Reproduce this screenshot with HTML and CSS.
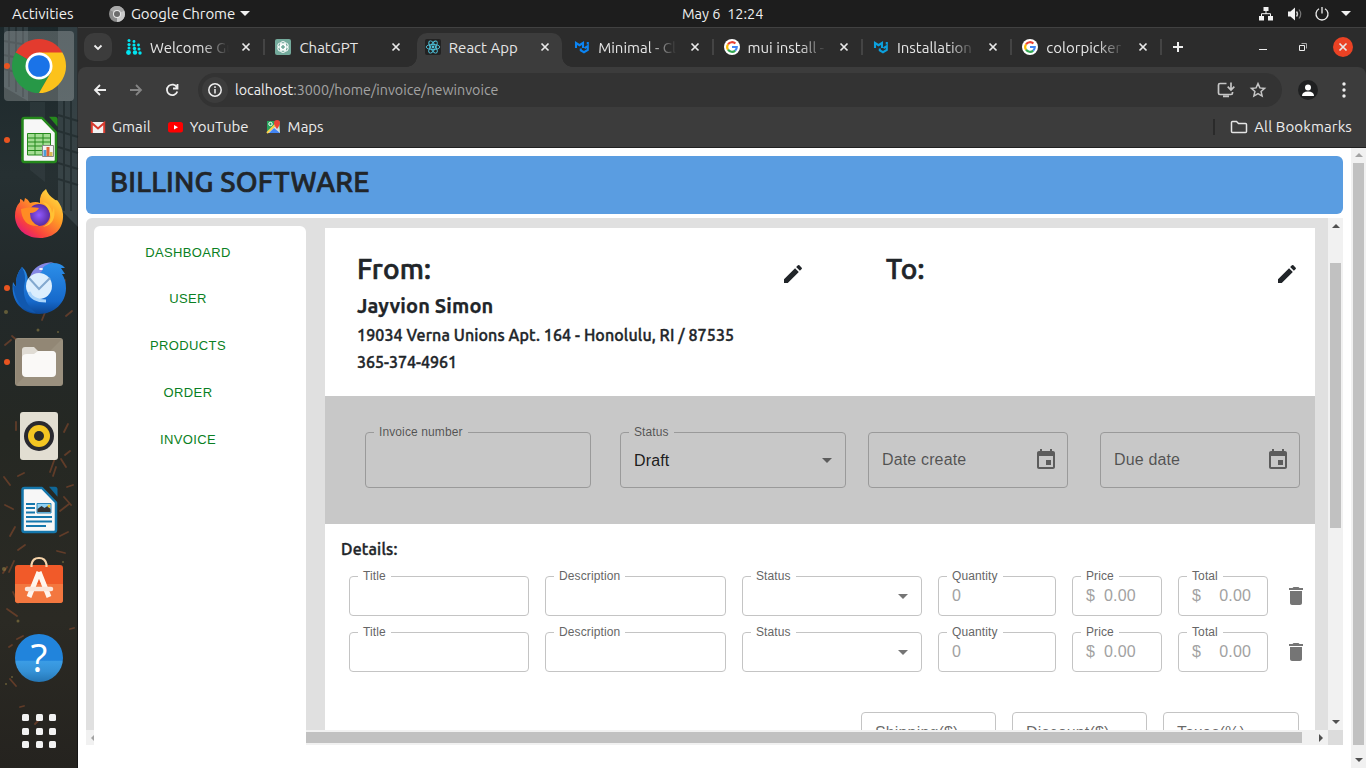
FILE: index.html
```html
<!DOCTYPE html>
<html lang="en">
<head>
<meta charset="utf-8">
<title>React App</title>
<link rel="stylesheet" href="styles.css">
</head>
<body>
<svg class="defs" width="0" height="0">
  <defs>
    <symbol id="close" viewBox="0 0 10 10"><path d="M1.500 1.500l7 7M8.500 1.500l-7 7" stroke="#e8e8e8" stroke-width="1.700" fill="none"/></symbol>
    <symbol id="google" viewBox="0 0 16 16"><circle cx="8" cy="8" r="8" fill="#fff"/><g fill="none" stroke-width="2.100"><path d="M4 5.300A4.800 4.800 0 0 1 11.400 4.600" stroke="#ea4335"/><path d="M4 5.300A4.800 4.800 0 0 0 4 10.700" stroke="#fbbc05"/><path d="M4 10.700A4.800 4.800 0 0 0 11.200 11.600" stroke="#34a853"/><path d="M8 8h4.800A4.800 4.800 0 0 1 11.200 11.600" stroke="#4285f4"/></g></symbol>
    <symbol id="mui" viewBox="0 0 16 16"><path d="M2 9V4L5.500 6.200 9 4v5M6.800 9.500v1.800L10 13.200l3.800-2.200V7.200L10.500 9.200M13.800 5.500V3" fill="none" stroke="currentColor" stroke-width="2.100"/></symbol>
    <symbol id="edit" viewBox="0 0 24 24"><path d="M3 17.250V21h3.750L17.810 9.940l-3.750-3.750L3 17.250zM20.710 7.040c.39-.39.39-1.020 0-1.410l-2.340-2.340a.9959.9959 0 0 0-1.410 0l-1.830 1.830 3.750 3.750 1.830-1.830z"/></symbol>
    <symbol id="event" viewBox="0 0 24 24"><path d="M17 12h-5v5h5v-5zM16 1v2H8V1H6v2H5c-1.110 0-1.990.9-1.990 2L3 19c0 1.100.89 2 2 2h14c1.100 0 2-.9 2-2V5c0-1.100-.9-2-2-2h-1V1h-2zm3 18H5V8h14v11z"/></symbol>
    <symbol id="drop" viewBox="0 0 24 24"><path d="M7 10l5 5 5-5z"/></symbol>
    <symbol id="trash" viewBox="0 0 24 24"><path d="M6 19c0 1.100.9 2 2 2h8c1.100 0 2-.9 2-2V7H6v12zM19 4h-3.500l-1-1h-5l-1 1H5v2h14V4z"/></symbol>
  </defs>
</svg>

<header class="topbar">
  <span class="activities">Activities</span>
  <svg class="app-icon" width="16" height="16" viewBox="0 0 16 16"><circle cx="8" cy="8" r="8" fill="#8b8b8b"/><path d="M8 8L1 4A8 8 0 0 1 15.200 4.500z" fill="#a9a9a9"/><path d="M8 8L15.200 4.500A8 8 0 0 1 8 16z" fill="#c9c9c9"/><circle cx="8" cy="8" r="4" fill="#e8e8e8"/><circle cx="8" cy="8" r="3" fill="#6b6b6b"/></svg>
  <span class="app-name">Google Chrome</span>
  <i class="caret"></i>
  <time class="clock">May 6&nbsp; 12:24</time>
  <div class="tray">
    <svg width="16" height="14" viewBox="0 0 16 14" fill="#f2f2f2"><path d="M5.500 0h5v4h-5zM1 9h5v4.500H1zM10 9h5v4.500h-5z"/><path d="M8 4v3M3.500 9V6.700h9V9" stroke="#f2f2f2" fill="none"/></svg>
    <svg width="16" height="14" viewBox="0 0 16 14"><path d="M1 4.500h2.500L8 .5v13l-4.500-4H1z" fill="#f2f2f2"/><path d="M9.500 4.500q2 2.500 0 5" stroke="#ccc" fill="none" stroke-width="1.400"/><path d="M12 2.500q3.500 4.500 0 9" stroke="#777" fill="none" stroke-width="1.200"/></svg>
    <svg width="16" height="14" viewBox="0 0 16 14" fill="none" stroke="#eee" stroke-width="1.300"><path d="M5 1.800a6 6 0 1 0 6 0M8 0v6.500"/></svg>
    <i class="caret"></i>
  </div>
</header>

<div class="desktop">
  <nav class="dock">
    <svg class="wallpaper" width="78" height="741" viewBox="0 0 78 741">
      <g fill="#5d6b70" opacity=".32"><path d="M4 0h24v74L4 60z"/><path d="M58 0h20v200l-20-20z"/><path d="M30 75h15v80l-15-12z" opacity=".5"/></g>
      <g stroke="#1b2527" stroke-width="2" opacity=".6"><path d="M4 14l24 4M4 28l24 5M4 42l24 6M58 88l20 6M58 104l20 6M58 120l20 6M58 136l20 6M58 152l20 6M9 0v60M16 0v65M23 0v70M64 74v110M71 74v110"/></g>
      <g fill="none" stroke="#8f4c2d" stroke-width="1.800" stroke-linecap="round" opacity=".55"><path d="M22 131l3-3M60 265l5-12M12 309l7 6M46 283l-4 10M72 284l-6 5M5 318l6-5M68 397l-4 8M16 395v8M18 449l6-3M50 445l5-14M56 440l-3 9M67 460l6-2M4 450l6 8M61 432l5 8M50 418l4-4M64 470l7 8M5 478l8 4M15 500l-5 9M9 545l5-11M57 524l8 2M13 565l5 11M7 582l10 7M17 612l6-3M70 602l4-1M60 484l9-7M7 540l-4 6M10 652l6 7M20 680l4-1M35 697l5-5M68 505l-8 4M9 620l3-2M25 518l-7 5M70 424l-5 4"/></g>
      <g fill="#b19a4d" opacity=".45"><circle cx="6" cy="285" r="2"/><circle cx="38" cy="303" r="1.500"/><circle cx="17" cy="317" r="2"/><circle cx="58" cy="305" r="1"/><circle cx="4" cy="542" r="2"/><circle cx="18" cy="594" r="1.500"/><circle cx="63" cy="535" r="1"/><circle cx="6" cy="657" r="1"/><circle cx="12" cy="650" r="1"/></g>
    </svg>
    <div class="launcher active running"><svg width="54" height="54" viewBox="0 0 54 54"><path d="M27 27L3.600 13.500A27 27 0 0 1 50.400 13.500z" fill="#e33b2e"/><path d="M27 27L3.600 13.500A27 27 0 0 0 27 54L38.700 33.700z" fill="#279847"/><path d="M27 54A27 27 0 0 0 50.400 13.500H27L38.700 33.700z" fill="#fcc21b"/><circle cx="27" cy="27" r="13.500" fill="#fff"/><circle cx="27" cy="27" r="10.800" fill="#1a73e8"/></svg></div>
    <div class="launcher running"><svg width="48" height="48" viewBox="0 0 48 48"><path d="M9.500 2H27L41 16.500V44q0 2-2 2H9.500q-2 0-2-2V4q0-2 2-2z" fill="#f7f7f7" stroke="#25891c" stroke-width="2.500" stroke-linejoin="round"/><path d="M34 .8h6q2.500 0 2.500 2.500v7.500z" fill="#25891c"/><path d="M12.500 17.500h23V39h-23z" fill="#a3dd93"/><path d="M12.500 17.500h23V39h-23zM20 17v22M28 17v22M12 22h24M12 26h24M12 30h24M12 34.500h24" stroke="#25891c" fill="none"/><path d="M27.500 29.500h11v11h-11z" fill="#f3f3f3" stroke="#888"/><path d="M28.500 34h3v6h-3z" fill="#4c9ed9"/><path d="M31.500 31h3v9h-3z" fill="#dd653a"/><path d="M34.500 36h3v4h-3z" fill="#d5bd55"/></svg></div>
    <div class="launcher"><svg width="48" height="50" viewBox="0 0 48 50"><defs><linearGradient id="fox" x1="1" y1="0" x2=".2" y2="1"><stop offset="0" stop-color="#fff24c"/><stop offset=".45" stop-color="#ff9a25"/><stop offset=".8" stop-color="#f8413e"/><stop offset="1" stop-color="#df1680"/></linearGradient><radialGradient id="orb"><stop offset="0" stop-color="#9059ff"/><stop offset="1" stop-color="#5a2ca0"/></radialGradient></defs><path d="M31 0q2 6 8 10 2 2 3 1 5 6 6 14C49 40 39 49 25 49 9 49 0 38 0 27q0-9 5-14v-3q2 0 4 3l1-4q3 1 5 5 6-2 10 0Q24 5 31 0z" fill="url(#fox)"/><circle cx="24" cy="26" r="11" fill="url(#orb)"/><path d="M6 20q9-3 18-1-3 5-9 5 0 10 9 13-17 1-18-17z" fill="#ff8c24"/><path d="M27 13q9 1 10 11l2-6q3 17-11 20 10-5 7-14-3-8-8-11z" fill="#ffc133"/></svg></div>
    <div class="launcher running"><svg width="54" height="54" viewBox="0 0 54 54"><defs><linearGradient id="bird" x1="0" y1="0" x2="0" y2="1"><stop offset="0" stop-color="#2c8fe9"/><stop offset=".75" stop-color="#1669cb"/><stop offset="1" stop-color="#0c4694"/></linearGradient></defs><path d="M10 6q6 5 6 15l6-5Q25 2 41 2q8 0 12 5h-4l4 6h-3q4 6 4 14c0 15-12 26-27 26C10 53-2 40 1 21l3 5Q3 14 10 6z" fill="url(#bird)"/><path d="M10 6q5 9 2 19-2 16 12 27Q4 49 1 24l3 2Q3 14 10 6z" fill="#1158ae"/><path d="M18 16Q22 2 42 1 30 4 30 10q-4 5-12 6z" fill="#8588e4"/><circle cx="27" cy="25" r="13" fill="#dceefd"/><path d="M17 17l10 11 11-11" fill="none" stroke="#83a9cf" stroke-width="2"/><path d="M17 31q3 9 17 9" fill="none" stroke="#a9d4fb" stroke-width="3"/><ellipse cx="29" cy="8" rx="2" ry="1" fill="#fff"/></svg></div>
    <div class="launcher running"><svg width="48" height="48" viewBox="0 0 48 48"><rect width="48" height="48" rx="3" fill="#9a907e"/><path d="M1 1h46L1 47z" fill="#8d8270" opacity=".6"/><path d="M7 19v-7q0-3 3-3h9l4 4h14q4 0 4 4v16H7z" fill="#e0dcd4"/><path d="M7 20q0-4 5-4h7l4-3h14q4 0 4 4v18q0 4-4 4H11q-4 0-4-4z" fill="#faf9f7"/></svg></div>
    <div class="launcher"><svg width="48" height="48" viewBox="0 0 48 48"><rect x="5" width="38" height="48" rx="3" fill="#e2ded2"/><circle cx="24" cy="24" r="15" fill="#29292f"/><circle cx="24" cy="24" r="11" fill="#f4c522"/><circle cx="24" cy="24" r="5" fill="#2a2a2a"/></svg></div>
    <div class="launcher"><svg width="48" height="48" viewBox="0 0 48 48"><path d="M9.500 2H27L41 16.500V44q0 2-2 2H9.500q-2 0-2-2V4q0-2 2-2z" fill="#f7f7f7" stroke="#1577ac" stroke-width="2.500" stroke-linejoin="round"/><path d="M34 .8h6q2.500 0 2.500 2.500v7.500z" fill="#0f6798"/><path d="M11 18h9M11 22h9M11 26.500h9M11 31h26M11 35.500h26M11 40h20" stroke="#1577ac" stroke-width="2"/><path d="M22 17.500h14V27H22z" fill="#8fd0f2" stroke="#2b86b8"/><path d="M22.500 26v-3l4-3 3 2 3-2 3 3v3z" fill="#333"/><circle cx="34" cy="20" r="1.500" fill="#edc12f"/></svg></div>
    <div class="launcher"><svg width="48" height="48" viewBox="0 0 48 48"><rect y="5" width="48" height="38" rx="3" fill="#f15a29"/><path d="M0 24h48v16q0 3-3 3H3q-3 0-3-3z" fill="#f3773f"/><path d="M16.500 7V4.500q1-6.500 7.500-6.500t7.500 6.500V7" fill="none" stroke="#f7d4aa" stroke-width="2.200"/><path d="M24 12L14 37M24 12l10 25" stroke="#fff5ed" stroke-width="5" fill="none"/><path d="M12 29h24" stroke="#fbe6da" stroke-width="4.500" stroke-linecap="round"/></svg></div>
    <div class="launcher"><div class="help">?</div></div>
    <div class="launcher"><div class="apps-grid"><i></i><i></i><i></i><i></i><i></i><i></i><i></i><i></i><i></i></div></div>
  </nav>

  <main class="browser">
    <div class="tabstrip">
      <button class="tab-search"><svg width="12" height="12" viewBox="0 0 12 12"><path d="M2.500 4.500L6 8l3.500-3.500" stroke="#eee" stroke-width="1.800" fill="none"/></svg></button>
      <div class="tab">
        <svg width="16" height="16" viewBox="0 0 16 16" fill="#00e5f2"><circle cx="3" cy="1.500" r="1.500"/><circle cx="8" cy="2.500" r="1.400"/><circle cx="3" cy="5.500" r="1.600"/><circle cx="8" cy="6" r="1.600"/><circle cx="12.500" cy="6" r="1.400"/><circle cx="3" cy="9" r="1.500"/><circle cx="8.500" cy="9.500" r="1.700"/><circle cx="13" cy="10" r="1.500"/><circle cx="2.500" cy="13.500" r="2.400"/><circle cx="9" cy="13.500" r="2.200"/><circle cx="14" cy="14" r="1.700"/></svg>
        <span class="tab-title fade">Welcome Gu</span><svg class="x" width="10" height="10"><use href="#close"/></svg>
      </div>
      <div class="tab sep">
        <svg width="16" height="16" viewBox="0 0 16 16"><rect width="16" height="16" rx="2" fill="#74aa9c"/><g fill="none" stroke="#fff" stroke-width=".9"><rect x="5.500" y="2.500" width="5" height="8" rx="2.500"/><rect x="5.500" y="2.500" width="5" height="8" rx="2.500" transform="rotate(60 8 8)"/><rect x="5.500" y="2.500" width="5" height="8" rx="2.500" transform="rotate(120 8 8)"/><rect x="5.500" y="2.500" width="5" height="8" rx="2.500" transform="rotate(180 8 8)"/><rect x="5.500" y="2.500" width="5" height="8" rx="2.500" transform="rotate(240 8 8)"/><rect x="5.500" y="2.500" width="5" height="8" rx="2.500" transform="rotate(300 8 8)"/></g></svg>
        <span class="tab-title">ChatGPT</span><svg class="x" width="10" height="10"><use href="#close"/></svg>
      </div>
      <div class="tab current">
        <svg width="16" height="16" viewBox="0 0 16 16"><rect width="16" height="16" rx="2" fill="#222"/><g fill="none" stroke="#4fc3dc" stroke-width=".9"><ellipse cx="8" cy="8" rx="6.800" ry="2.600"/><ellipse cx="8" cy="8" rx="6.800" ry="2.600" transform="rotate(60 8 8)"/><ellipse cx="8" cy="8" rx="6.800" ry="2.600" transform="rotate(120 8 8)"/></g><circle cx="8" cy="8" r="1.400" fill="#4fc3dc"/></svg>
        <span class="tab-title">React App</span><svg class="x" width="10" height="10"><use href="#close"/></svg>
      </div>
      <div class="tab">
        <svg class="mui-blue" width="16" height="16"><use href="#mui"/></svg>
        <span class="tab-title fade">Minimal - Cli</span><svg class="x" width="10" height="10"><use href="#close"/></svg>
      </div>
      <div class="tab sep">
        <svg width="16" height="16"><use href="#google"/></svg>
        <span class="tab-title fade">mui install -</span><svg class="x" width="10" height="10"><use href="#close"/></svg>
      </div>
      <div class="tab sep">
        <svg class="mui-cyan" width="16" height="16"><use href="#mui"/></svg>
        <span class="tab-title fade">Installation</span><svg class="x" width="10" height="10"><use href="#close"/></svg>
      </div>
      <div class="tab sep">
        <svg width="16" height="16"><use href="#google"/></svg>
        <span class="tab-title fade">colorpicker</span><svg class="x" width="10" height="10"><use href="#close"/></svg>
      </div>
      <div class="new-tab sep"><svg width="10" height="10" viewBox="0 0 10 10"><path d="M5 0v10M0 5h10" stroke="#eee" stroke-width="2"/></svg></div>
      <div class="window-controls">
        <svg width="8" height="8" viewBox="0 0 8 8"><path d="M0 6.500h8" stroke="#eee"/></svg>
        <svg width="8" height="8" viewBox="0 0 8 8"><path d="M.5 2.500h5v5h-5z" stroke="#eee" fill="none"/><path d="M2.500.5h5v5" stroke="#aaa" fill="none"/></svg>
        <span class="window-close"><svg width="10" height="10"><use href="#close"/></svg></span>
      </div>
    </div>

    <div class="chrome-bars">
      <div class="toolbar">
        <svg width="14" height="14" viewBox="0 0 14 14"><path d="M13 7H2M7 2L2 7l5 5" stroke="#eee" stroke-width="1.800" fill="none"/></svg>
        <svg width="14" height="14" viewBox="0 0 14 14"><path d="M1 7h11M7 2l5 5-5 5" stroke="#858585" stroke-width="1.800" fill="none"/></svg>
        <svg width="14" height="14" viewBox="0 0 14 14"><path d="M12 4.500A5.300 5.300 0 1 0 12.300 8.500M12.500 1v4.500H8" stroke="#eee" stroke-width="1.800" fill="none"/></svg>
        <div class="omnibox">
          <span class="site-info"><svg width="16" height="16" viewBox="0 0 16 16"><circle cx="8" cy="8" r="6.200" stroke="#eee" stroke-width="1.500" fill="none"/><path d="M8 7v4.500M8 4.300v1.600" stroke="#eee" stroke-width="1.500"/></svg></span>
          <span class="url"><b>localhost</b>:3000/home/invoice/newinvoice</span>
          <svg class="install" width="18" height="16" viewBox="0 0 18 16"><path d="M9.500 1.500H3q-1.500 0-1.500 1.500v8q0 1.500 1.500 1.500h11q1.500 0 1.500-1.500v-1M14 .5v7M10.700 4.700L14 8l3.300-3.300M6 14.300h6" stroke="#c6c6c6" stroke-width="1.700" fill="none"/></svg>
          <svg width="16" height="16" viewBox="0 0 16 16"><path d="M8 1.600l1.900 4.300 4.700.5-3.500 3.100 1 4.600L8 11.700l-4.100 2.400 1-4.600L1.400 6.400l4.700-.5z" stroke="#c6c6c6" stroke-width="1.500" fill="none"/></svg>
        </div>
        <svg class="avatar" width="20" height="20" viewBox="0 0 20 20"><circle cx="10" cy="10" r="10" fill="#1f2021"/><circle cx="10" cy="7.500" r="3" fill="#fff"/><path d="M4 16q0-4.500 6-4.500t6 4.500z" fill="#fff"/></svg>
        <svg class="kebab" width="4" height="16" viewBox="0 0 4 16" fill="#eee"><circle cx="2" cy="2" r="1.700"/><circle cx="2" cy="8" r="1.700"/><circle cx="2" cy="14" r="1.700"/></svg>
      </div>
      <div class="bookmarks">
        <svg width="16" height="16" viewBox="0 0 16 16"><path d="M1 3h14v11H1z" fill="#f2f2f2"/><path d="M1.800 14V4L8 9.500 14.200 4v10" fill="none" stroke="#d93a2e" stroke-width="2"/></svg>
        <span class="bm gmail">Gmail</span>
        <svg width="16" height="16" viewBox="0 0 16 16"><rect y="3" width="15" height="10.500" rx="2.500" fill="#f00"/><path d="M6 6v4.600l4-2.300z" fill="#fff"/></svg>
        <span class="bm youtube">YouTube</span>
        <svg width="16" height="16" viewBox="0 0 16 16"><path d="M1 2h13v12H1z" fill="#28a35d"/><path d="M1 14L13 4l1 10z" fill="#d9dddf"/><path d="M3 14l5-5 6 5z" fill="#4285f4"/><path d="M1 14L12 3" stroke="#fdd34c" stroke-width="2"/><path d="M11 1a3 3 0 0 1 3 3q0 2-3 6-3-4-3-6a3 3 0 0 1 3-3z" fill="#ea4335"/><circle cx="4.500" cy="5" r="1.700" fill="none" stroke="#fff"/></svg>
        <span class="bm">Maps</span>
        <i class="bm-rule"></i>
        <svg class="folder" width="18" height="14" viewBox="0 0 18 14"><path d="M1.500 11.500v-9q0-1 1-1h4L8.500 3.500h7q1 0 1 1v7q0 1-1 1h-13q-1 0-1-1z" stroke="#e4e4e4" stroke-width="1.500" fill="none"/></svg>
        <span class="bm all">All Bookmarks</span>
      </div>
    </div>

    <div class="viewport">
      <div class="page">
        <div class="brand"><h1>BILLING SOFTWARE</h1></div>
        <div class="shell">
          <aside class="sidebar">
            <a>DASHBOARD</a><a>USER</a><a>PRODUCTS</a><a>ORDER</a><a>INVOICE</a>
          </aside>
          <div class="content">
            <section class="paper">
              <div class="parties">
                <div class="party from">
                  <div class="party-head"><h2>From:</h2><svg class="edit" width="24" height="24"><use href="#edit"/></svg></div>
                  <h3>Jayvion Simon</h3>
                  <p class="address">19034 Verna Unions Apt. 164 - Honolulu, RI / 87535</p>
                  <p>365-374-4961</p>
                </div>
                <div class="party to">
                  <div class="party-head"><h2>To:</h2><svg class="edit" width="24" height="24"><use href="#edit"/></svg></div>
                </div>
              </div>
              <div class="meta">
                <div class="field"><label>Invoice number</label></div>
                <div class="field"><label>Status</label><span class="value">Draft</span><svg class="arrow" width="24" height="24"><use href="#drop"/></svg></div>
                <div class="field date"><span class="placeholder">Date create</span><svg width="24" height="24"><use href="#event"/></svg></div>
                <div class="field date"><span class="placeholder">Due date</span><svg width="24" height="24"><use href="#event"/></svg></div>
              </div>
              <div class="details">
                <h4>Details:</h4>
                <div class="item">
                  <div class="field"><label>Title</label></div>
                  <div class="field"><label>Description</label></div>
                  <div class="field"><label>Status</label><svg class="arrow" width="24" height="24"><use href="#drop"/></svg></div>
                  <div class="field"><label>Quantity</label><span class="hint">0</span></div>
                  <div class="field"><label>Price</label><span class="hint">$</span><span class="hint amount">0.00</span></div>
                  <div class="field"><label>Total</label><span class="hint">$</span><span class="hint amount end">0.00</span></div>
                  <svg class="trash" width="24" height="24"><use href="#trash"/></svg>
                </div>
                <div class="item">
                  <div class="field"><label>Title</label></div>
                  <div class="field"><label>Description</label></div>
                  <div class="field"><label>Status</label><svg class="arrow" width="24" height="24"><use href="#drop"/></svg></div>
                  <div class="field"><label>Quantity</label><span class="hint">0</span></div>
                  <div class="field"><label>Price</label><span class="hint">$</span><span class="hint amount">0.00</span></div>
                  <div class="field"><label>Total</label><span class="hint">$</span><span class="hint amount end">0.00</span></div>
                  <svg class="trash" width="24" height="24"><use href="#trash"/></svg>
                </div>
                <div class="extras">
                  <div class="field"><span class="placeholder">Shipping($)</span></div>
                  <div class="field"><span class="placeholder">Discount($)</span></div>
                  <div class="field"><span class="placeholder">Taxes(%)</span></div>
                </div>
              </div>
            </section>
          </div>
          <div class="vbar inner"><i class="up dark"></i><b></b><i class="down"></i></div>
          <div class="hbar"><i class="left"></i><b></b><i class="right"></i></div>
        </div>
      </div>
      <div class="vbar outer"><i class="up"></i><b></b><i class="down"></i></div>
    </div>
  </main>
</div>
</body>
</html>
```
FILE: styles.css
```css
* { box-sizing: border-box; }
body { margin: 0; width: 1366px; height: 768px; overflow: hidden; display: flex; flex-direction: column; font-family: Ubuntu, "Noto Sans", sans-serif; background: #fff; }
svg { display: block; flex: none; overflow: visible; }
.defs { position: absolute; }
h1, h2, h3, h4, p { margin: 0; white-space: nowrap; }
h1, h2, h3, h4, .party p { color: #212529; }

.topbar { height: 27px; flex: none; background: #1d1d1d; color: #f0f0f0; font-size: 15px; display: grid; grid-template-columns: 97px 16px 6px 121px 1fr auto; align-items: center; padding: 0 15px 0 12px; white-space: nowrap; position: relative; }
.topbar .app-name { grid-column: 4; letter-spacing: -.08px; }
.topbar .app-name + .caret { position: absolute; left: 240px; top: 11px; }
.caret { width: 0; height: 0; border: 5px solid transparent; border-top-color: #f0f0f0; border-bottom: 0; }
.clock { position: absolute; left: 682px; font-size: 14.500px; }
.tray { grid-column: 6; display: flex; align-items: center; gap: 11px; }
.tray svg:first-child { margin-right: 2px; }

.desktop { flex: 1; display: flex; min-height: 0; }
.dock { width: 78px; position: relative; background: linear-gradient(#1c282b, #263032 20%, #22292a 35%, #252823 55%, #2b2a24 80%, #25231f); border-right: 1px solid #151515; padding: 4px 4px 0; display: flex; flex-direction: column; gap: 4px; }
.wallpaper { position: absolute; left: 0; top: 0; }
.launcher { width: 70px; height: 70px; flex: none; border-radius: 4px; display: flex; align-items: center; justify-content: center; position: relative; }
.launcher.active { background: rgba(255,255,255,.22); }
.running::before { content: ""; position: absolute; left: 0; top: 32px; width: 6px; height: 6px; border-radius: 50%; background: #e95420; }
.help { width: 48px; height: 48px; border-radius: 50%; background: linear-gradient(#2184dc 55%, #3b9de6 56%, #3591d6 78%, #2576b5); color: #fff; font: 39px/46px "Open Sans", sans-serif; text-align: center; }
.apps-grid { display: grid; grid-template-columns: repeat(3, 7px); gap: 6.500px; margin-top: -2px; }
.apps-grid i { height: 7px; border-radius: 1.500px; background: #f2f2f2; }

.browser { flex: 1; min-width: 0; display: flex; flex-direction: column; background: #2c2c2c; }
.tabstrip { height: 40px; flex: none; border-top: 1px solid #414141; display: flex; align-items: center; padding: 0 0 1px 6px; color: #e6e6e6; font-size: 15px; }
.tab-search { width: 28px; height: 28px; padding: 0; border: 0; border-radius: 10px; background: #3c3c3c; display: flex; align-items: center; justify-content: center; margin-right: 6px; }
.tab { width: 149.400px; height: 38px; flex: none; display: flex; align-items: center; padding: 0 13px 0 8px; position: relative; }
.tab-title { margin-left: 8px; width: 79px; overflow: hidden; white-space: pre; }
.fade { mask-image: linear-gradient(90deg, #000 65%, transparent); }
.tab .x { margin-left: auto; margin-right: 3px; }
.tab.current::before { content: ""; position: absolute; z-index: 0; left: 0; right: 4px; top: 5px; bottom: -1px; border-radius: 10px 10px 0 0; background: #3c3c3c; }
.tab.current::after { content: ""; position: absolute; left: -10px; right: -6px; bottom: -1px; height: 10px; background: radial-gradient(circle at 0 0, transparent 9.500px, #3c3c3c 10px) left / 10px 10px no-repeat, radial-gradient(circle at 100% 0, transparent 9.500px, #3c3c3c 10px) right / 10px 10px no-repeat; }
.tab.current > * { position: relative; z-index: 1; }
.sep { position: relative; }
.sep::before { content: ""; position: absolute; left: -4px; top: 50%; margin-top: -8px; width: 2px; height: 16px; background: #444; }
.mui-blue { color: #0b84f3; }
.mui-cyan { color: #0ca0dd; }
.new-tab { padding-left: 9px; }
.window-controls { margin-left: auto; display: flex; align-items: center; gap: 32px; padding-right: 13px; }
.window-close { width: 20px; height: 20px; margin-left: -6px; border-radius: 50%; background: #eb4224; display: flex; align-items: center; justify-content: center; }

.chrome-bars { height: 81px; flex: none; background: #3c3c3c; border-radius: 8px 8px 0 0; border-bottom: 1px solid #202020; }
.toolbar { height: 46px; display: flex; align-items: center; gap: 22px; padding: 0 20px 0 15px; }
.omnibox { flex: none; width: 1084px; height: 34px; margin-left: -3px; padding: 0 16px 0 4px; border-radius: 17px; background: #333; display: flex; align-items: center; color: #a3a3a3; font-size: 14.300px; }
.site-info { width: 26px; height: 26px; border-radius: 50%; background: #3c3c3c; display: flex; align-items: center; justify-content: center; margin-right: 7px; }
.url b { color: #eee; font-weight: 400; }
.install { margin-left: auto; margin-right: 15px; }
.avatar { margin-left: -6px; }
.kebab { margin-left: 2px; }
.bookmarks { height: 27px; display: flex; align-items: center; padding: 0 14px 0 12px; color: #ececec; font-size: 15px; line-height: 17px; white-space: nowrap; }
.bm { margin-left: 6px; }
.bm.gmail { margin-right: 17px; letter-spacing: .1px; }
.bm.youtube { margin-right: 17px; }
.bm.all { letter-spacing: .13px; }
.bm-rule { width: 2px; height: 16px; background: #2a2a2a; margin-left: auto; margin-right: 15px; }

.viewport { flex: 1; min-height: 0; display: flex; background: #fff; }
.page { flex: 1; min-width: 0; padding: 8px 8px 0; }
.brand { height: 58px; border-radius: 6px; background: #5a9de1; padding: 9px 24px; }
h1, h2 { font-size: 28px; line-height: 34px; font-weight: 500; letter-spacing: .18px; -webkit-text-stroke: .7px #212529; }
.shell { position: relative; margin-top: 4px; height: 550px; display: grid; grid-template-columns: 1242px 15px; grid-template-rows: 512px 15px; }
.content { grid-area: 1 / 1; background: #e0e0e0; border-radius: 6px 0 0 0; padding: 10px 13px 0 239px; overflow: hidden; }
.sidebar { position: absolute; z-index: 2; left: 8px; top: 8px; width: 212px; height: 542px; background: #fff; border-radius: 6px 6px 0 0; padding: 3.500px 24px 0 0; display: flex; flex-direction: column; }
.sidebar a { font: 13px/46.750px "Liberation Sans", Arial, sans-serif; letter-spacing: .37px; text-align: center; color: #0a7f23; }
.paper { height: 502px; overflow: hidden; background: #fff; }
.parties { height: 168px; display: flex; padding: 24px 0 0 32px; }
.party.from { width: 529px; }
.party.to { width: 413px; }
.party-head { display: flex; justify-content: space-between; height: 34px; margin-bottom: 8px; }
.from .party-head { padding-right: 81px; }
.edit { margin-top: 10px; fill: #212529; }
h3 { font-size: 20px; line-height: 24px; font-weight: 700; letter-spacing: .13px; -webkit-text-stroke: .25px #212529; }
.party p { font-size: 16px; line-height: 19px; font-weight: 500; margin-top: 8px; -webkit-text-stroke: .4px #212529; }
.party .address { letter-spacing: .11px; }
.meta { height: 128px; background: #c8c8c8; padding: 36px 15px 0 40px; display: grid; grid-template-columns: 226px 226px 200px 200px; column-gap: 29px; }
.field { --line: #c4c4c4; --back: #fff; position: relative; height: 40px; border: 1px solid var(--line); border-radius: 4px; padding-left: 13px; display: flex; align-items: center; font: 16px/20px "Liberation Sans", Arial, sans-serif; letter-spacing: .15px; color: rgba(0,0,0,.87); white-space: nowrap; }
.field label { position: absolute; left: 8px; top: -8px; padding: 0 5px; font-size: 12px; line-height: 15px; letter-spacing: .11px; color: #666; background: var(--back); }
.meta .field { --line: #9a9a9a; --back: #c8c8c8; height: 56px; }
.meta .field label, .placeholder { color: rgba(0,0,0,.6); }
.meta .value { padding-top: 1px; }
.meta .field:nth-child(3) { margin-left: -7px; margin-right: 7px; }
.meta .field:nth-child(4) { margin-left: -4px; margin-right: 4px; }
.field svg { margin-left: auto; fill: rgba(0,0,0,.54); }
.date svg { margin-right: 9px; }
.field .arrow { margin-right: 6px; }
.hint { color: #a2a2a2; }
.amount { margin-left: 9px; }
.amount.end { margin-left: auto; margin-right: 16px; }
.details { padding: 15px 7px 0 16px; }
h4 { font-size: 16px; line-height: 20px; font-weight: 500; margin-bottom: 17px; letter-spacing: .2px; -webkit-text-stroke: .4px #212529; }
.item { display: grid; grid-template-columns: 180px 181px 180px 118px 90px 90px 24px; column-gap: 16px; align-items: center; padding-left: 8px; margin-bottom: 16px; }
.trash { fill: #757575; }
.extras { display: grid; grid-template-columns: 135px 135px 136px; column-gap: 16px; justify-content: end; padding-right: 9px; margin-top: 40px; }
.extras .placeholder { padding-top: 1px; }

.vbar { width: 15px; background: #f1f1f1; display: flex; flex-direction: column; align-items: center; }
.vbar b { width: 11px; background: #c1c1c1; }
.vbar i, .hbar i { width: 0; height: 0; border: 4px solid transparent; flex: none; }
.vbar .up { border-top: 0; border-bottom-color: #a3a3a3; margin-top: 5px; }
.vbar .dark { border-bottom-color: #505050; margin-top: 6px; }
.vbar .down { border-bottom: 0; border-top-color: #505050; margin-top: auto; margin-bottom: 6px; }
.outer b { height: 582px; margin-top: 6px; }
.inner { grid-area: 1 / 2; }
.inner b { height: 265px; margin-top: 35px; }
.hbar { grid-area: 2 / 1 / 3 / 3; background: linear-gradient(90deg, #f1f1f1 1242px, #dcdcdc 1242px); display: flex; align-items: center; }
.hbar b { height: 11px; width: 996px; margin-left: 211px; background: #c1c1c1; }
.hbar .left { border-left: 0; border-right-color: #a3a3a3; margin-left: 5px; }
.hbar .right { border-right: 0; border-left-color: #505050; margin-left: 17px; }
```
